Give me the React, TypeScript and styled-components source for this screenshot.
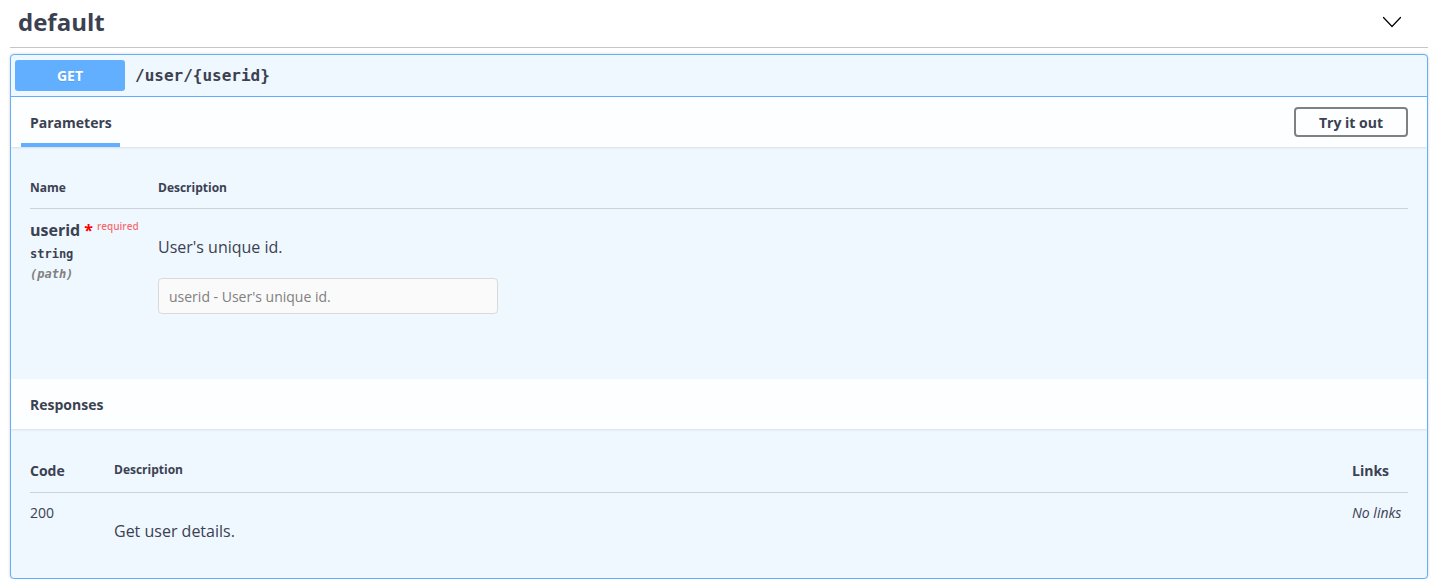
import React from "react";
import styled, { createGlobalStyle } from "styled-components";

const GlobalStyle = createGlobalStyle`
  html, body {
    margin: 0;
    padding: 0;
    background: #ffffff;
  }
  body {
    font-family: "Open Sans", "Liberation Sans", sans-serif;
    color: #3b4151;
  }
  * {
    box-sizing: border-box;
  }
`;

const Page = styled.div`
  width: 1441px;
  padding: 0 13px 0 10px;
`;

const TagHeader = styled.div`
  display: flex;
  align-items: center;
  justify-content: space-between;
  height: 48px;
  padding: 0 26px 3px 8px;
  border-bottom: 1px solid rgba(59, 65, 81, 0.3);
`;

const TagTitle = styled.h3`
  margin: 0;
  font-size: 24px;
  font-weight: 700;
  line-height: 30px;
  color: #3b4151;
`;

const ExpandButton = styled.button`
  display: flex;
  padding: 0;
  border: none;
  background: none;
  cursor: pointer;
`;

const Opblock = styled.div`
  margin-top: 6px;
  border: 1px solid #61affe;
  border-radius: 4px;
  background: #eff7ff;
  box-shadow: 0 0 3px rgba(0, 0, 0, 0.19);
  overflow: hidden;
`;

const Summary = styled.div`
  display: flex;
  align-items: center;
  padding: 5px 4px;
  border-bottom: 1px solid #61affe;
`;

const MethodBadge = styled.span`
  display: flex;
  align-items: center;
  justify-content: center;
  width: 110px;
  height: 31px;
  border-radius: 3px;
  background: #61affe;
  color: #ffffff;
  font-size: 14px;
  font-weight: 700;
  text-shadow: 0 1px 0 rgba(0, 0, 0, 0.1);
`;

const PathText = styled.span`
  margin-left: 10px;
  font-family: "DejaVu Sans Mono", "Liberation Mono", monospace;
  font-size: 16px;
  font-weight: 700;
  color: #3b4151;
`;

const SectionHeader = styled.div`
  display: flex;
  align-items: stretch;
  justify-content: space-between;
  height: 50px;
  padding: 0 19px 0 10px;
  background: rgba(255, 255, 255, 0.8);
  box-shadow: 0 1px 2px rgba(0, 0, 0, 0.1);
  position: relative;
`;

const TabTitle = styled.div<{ $active?: boolean }>`
  position: relative;
  display: flex;
  align-items: center;
  padding: 1px 8px 0 9px;
  font-size: 14px;
  font-weight: 700;
  color: #3b4151;

  &::after {
    content: "";
    display: ${(p) => (p.$active ? "block" : "none")};
    position: absolute;
    left: 0;
    right: 0;
    bottom: 0;
    height: 4px;
    background: #61affe;
  }
`;

const HeaderActions = styled.div`
  display: flex;
  align-items: center;
`;

const TryButton = styled.button`
  width: 114px;
  height: 30px;
  border: 2px solid #808080;
  border-radius: 4px;
  background: transparent;
  font-family: "Open Sans", "Liberation Sans", sans-serif;
  font-size: 14px;
  font-weight: 700;
  color: #3b4151;
  cursor: pointer;
`;

const SectionBody = styled.div<{ $height: number }>`
  height: ${(p) => p.$height}px;
  padding: 21px 19px 0 19px;
`;

const ParamGrid = styled.div`
  display: grid;
  grid-template-columns: 128px 1fr;
`;

const ColHeader = styled.div<{ $size?: number }>`
  padding: 12px 0;
  font-size: ${(p) => p.$size ?? 12}px;
  font-weight: 700;
  line-height: ${(p) => (p.$size ? 18 : 16)}px;
  color: #3b4151;
  border-bottom: 1px solid rgba(59, 65, 81, 0.2);
`;

const Cell = styled.div`
  padding-top: 10px;
`;

const ParamName = styled.div`
  font-size: 16px;
  font-weight: 700;
  line-height: 22px;
  color: #3b4151;
  white-space: nowrap;
`;

const RequiredStar = styled.span`
  margin-left: 4px;
  color: red;
  font-size: 16px;
`;

const RequiredText = styled.sup`
  margin-left: 4px;
  font-size: 10px;
  font-weight: 600;
  color: rgba(255, 0, 0, 0.6);
  position: relative;
  top: -6px;
  vertical-align: baseline;
`;

const MonoLine = styled.div<{ $muted?: boolean }>`
  margin-top: ${(p) => (p.$muted ? 4 : 3)}px;
  font-family: "DejaVu Sans Mono", "Liberation Mono", monospace;
  font-size: 12px;
  font-weight: 700;
  line-height: 16px;
  font-style: ${(p) => (p.$muted ? "italic" : "normal")};
  color: ${(p) => (p.$muted ? "#808080" : "#3b4151")};
`;

const Paragraph = styled.p<{ $top: number }>`
  margin: ${(p) => p.$top}px 0 0;
  font-size: 16px;
  line-height: 22px;
  color: #3b4151;
`;

const ParamInput = styled.input`
  display: block;
  width: 340px;
  height: 36px;
  margin-top: 20px;
  padding: 8px 10px;
  border: 1px solid #d9d9d9;
  border-radius: 4px;
  background: #fafafa;
  font-family: "Open Sans", "Liberation Sans", sans-serif;
  font-size: 14px;
  color: #3b4151;
  cursor: not-allowed;

  &::placeholder {
    color: #808080;
  }
`;

const ResponseGrid = styled.div`
  display: grid;
  grid-template-columns: 84px 1fr 56px;
`;

const CodeText = styled.div`
  font-size: 14px;
  line-height: 20px;
  color: #3b4151;
`;

const NoLinks = styled.div`
  font-size: 14px;
  line-height: 20px;
  font-style: italic;
  color: #3b4151;
`;

const Chevron = () => (
  <svg width="20" height="12" viewBox="0 0 20 12" aria-hidden="true">
    <polyline
      points="1.5,1.5 10,10.5 18.5,1.5"
      fill="none"
      stroke="#000"
      strokeWidth="1.2"
      strokeLinecap="round"
      strokeLinejoin="round"
    />
  </svg>
);

const App = () => {
  return (
    <Page>
      <GlobalStyle />
      <TagHeader>
        <TagTitle>default</TagTitle>
        <ExpandButton aria-label="Collapse operation">
          <Chevron />
        </ExpandButton>
      </TagHeader>

      <Opblock>
        <Summary>
          <MethodBadge>GET</MethodBadge>
          <PathText>/user/&#123;userid&#125;</PathText>
        </Summary>

        <SectionHeader>
          <TabTitle $active>Parameters</TabTitle>
          <HeaderActions>
            <TryButton>Try it out</TryButton>
          </HeaderActions>
        </SectionHeader>
        <SectionBody $height={232}>
          <ParamGrid>
            <ColHeader>Name</ColHeader>
            <ColHeader>Description</ColHeader>
            <Cell>
              <ParamName>
                userid
                <RequiredStar>*</RequiredStar>
                <RequiredText>required</RequiredText>
              </ParamName>
              <MonoLine>string</MonoLine>
              <MonoLine $muted>(path)</MonoLine>
            </Cell>
            <Cell>
              <Paragraph $top={17}>User's unique id.</Paragraph>
              <ParamInput
                type="text"
                placeholder="userid - User's unique id."
                disabled
              />
            </Cell>
          </ParamGrid>
        </SectionBody>

        <SectionHeader>
          <TabTitle>Responses</TabTitle>
        </SectionHeader>
        <SectionBody $height={149}>
          <ResponseGrid>
            <ColHeader $size={14}>Code</ColHeader>
            <ColHeader>Description</ColHeader>
            <ColHeader $size={14}>Links</ColHeader>
            <Cell>
              <CodeText>200</CodeText>
            </Cell>
            <Cell>
              <Paragraph $top={17}>Get user details.</Paragraph>
            </Cell>
            <Cell>
              <NoLinks>No links</NoLinks>
            </Cell>
          </ResponseGrid>
        </SectionBody>
      </Opblock>
    </Page>
  );
};

export default App;
